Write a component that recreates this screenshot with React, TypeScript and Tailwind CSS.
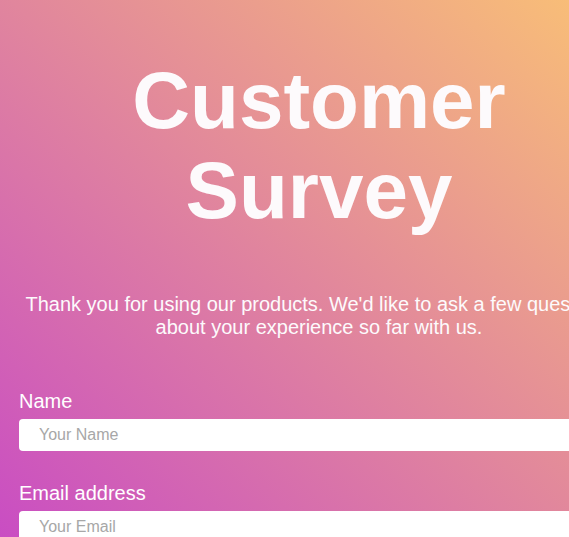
export default function App() {
  return (
    <div className="min-h-screen bg-fixed bg-[linear-gradient(to_top_right,#c94dc3,#f8bd78)] font-['Liberation_Sans',Arial,sans-serif]">
      <div className="w-[639px] pl-[19px] pr-5 pt-[56px] pb-10">
        {/* Header */}
        <h1 className="text-center text-[80px] font-bold leading-[90px] text-[#fdfafc]">Customer Survey</h1>
        <p className="mt-[57px] text-center text-xl leading-[23px] text-[#fdfafc]">
          Thank you for using our products. We'd like to ask a few questions about your experience so far with us.
        </p>

        {/* Form */}
        <form className="mt-[51px] flex flex-col gap-[31px]">
          <div>
            <label htmlFor="name" className="mb-[6px] block text-xl leading-[23px] text-white">
              Name
            </label>
            <input
              id="name"
              type="text"
              placeholder="Your Name"
              className="block h-8 w-full rounded bg-white pl-5 text-base text-gray-800 outline-none placeholder:text-[#a7a7a7]"
            />
          </div>
          <div>
            <label htmlFor="email" className="mb-[6px] block text-xl leading-[23px] text-white">
              Email address
            </label>
            <input
              id="email"
              type="email"
              placeholder="Your Email"
              className="block h-8 w-full rounded bg-white pl-5 text-base text-gray-800 outline-none placeholder:text-[#a7a7a7]"
            />
          </div>
        </form>
      </div>
    </div>
  )
}
